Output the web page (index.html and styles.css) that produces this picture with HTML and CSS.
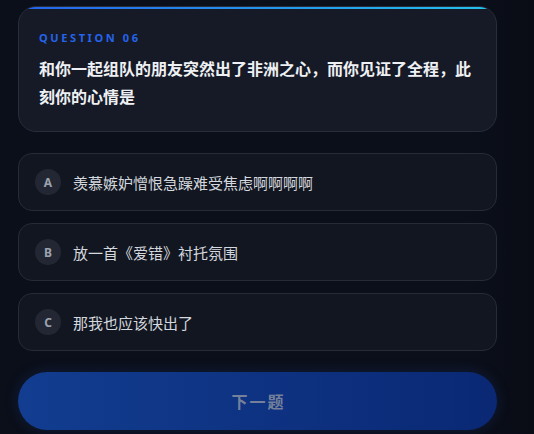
FILE: index.html
```html
<!DOCTYPE html>
<html lang="zh-CN">
<head>
    <meta charset="UTF-8">
    <meta name="viewport" content="width=device-width, initial-scale=1.0">
    <title>Question 06</title>
    <link rel="stylesheet" href="styles.css">
</head>
<body>
    <div class="quiz">
        <div class="question-card">
            <div class="q-label">QUESTION 06</div>
            <p class="q-text">和你一起组队的朋友突然出了非洲之心，而你见证了全程，此刻你的心情是</p>
        </div>
        <div class="options">
            <div class="option">
                <span class="badge">A</span>
                <span class="opt-text">羡慕嫉妒憎恨急躁难受焦虑啊啊啊啊</span>
            </div>
            <div class="option">
                <span class="badge">B</span>
                <span class="opt-text">放一首《爱错》衬托氛围</span>
            </div>
            <div class="option">
                <span class="badge">C</span>
                <span class="opt-text">那我也应该快出了</span>
            </div>
        </div>
        <button class="next-btn" disabled>下一题</button>
    </div>
</body>
</html>
```

FILE: styles.css
```css
* { margin: 0; padding: 0; box-sizing: border-box; }
body {
    font-family: "Noto Sans", "Noto Sans CJK SC", sans-serif;
    background: linear-gradient(90deg, #0b0f1a 0%, #0b0f1a 88%, #090c15 100%);
    min-height: 434px;
    color: #e5e7eb;
}
.quiz {
    width: 479px;
    margin-left: 18px;
    padding-top: 6px;
}
.question-card {
    position: relative;
    overflow: hidden;
    background: #151a26;
    border: 1px solid #272d3b;
    border-radius: 18px;
    padding: 23px 20px 20px;
}
.question-card::before {
    content: "";
    position: absolute;
    top: 0;
    left: 0;
    right: 0;
    height: 2px;
    background: linear-gradient(90deg, #2563eb, #22c3ee);
}
.q-label {
    font-size: 11px;
    font-weight: 700;
    letter-spacing: 2.6px;
    line-height: 16px;
    color: #2563eb;
}
.q-text {
    margin-top: 9px;
    font-size: 16px;
    font-weight: 700;
    line-height: 28px;
    color: #eef0f4;
}
.options {
    margin-top: 21px;
    display: flex;
    flex-direction: column;
    gap: 12px;
}
.option {
    display: flex;
    align-items: center;
    gap: 12px;
    height: 58px;
    padding: 0 16px;
    background: #121620;
    border: 1px solid #262b38;
    border-radius: 14px;
}
.badge {
    width: 26px;
    height: 26px;
    border-radius: 50%;
    background: #232733;
    color: #9ca3af;
    font-size: 12px;
    font-weight: 700;
    display: flex;
    align-items: center;
    justify-content: center;
}
.opt-text {
    font-size: 15px;
    color: #d4d8df;
}
.next-btn {
    display: block;
    width: 100%;
    height: 58px;
    margin-top: 21px;
    border: none;
    border-radius: 29px;
    background: linear-gradient(90deg, #123d90, #0a2874);
    box-shadow: 0 0 14px rgba(30, 70, 160, 0.25);
    font-family: "Noto Sans CJK SC", sans-serif;
    font-size: 16px;
    font-weight: 700;
    letter-spacing: 2px;
    text-indent: 2px;
    color: #75819b;
}
```
